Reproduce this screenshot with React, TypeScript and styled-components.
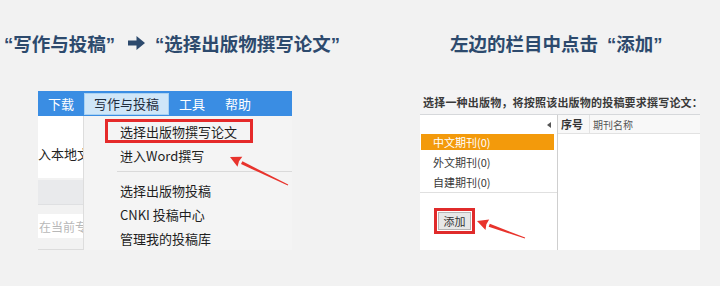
import React from 'react';
import styled, { createGlobalStyle } from 'styled-components';

const GlobalStyle = createGlobalStyle`
  html, body {
    margin: 0;
    padding: 0;
    background: #f2f2f2;
  }
  #root {
    width: 720px;
    height: 286px;
    overflow: hidden;
  }
`;

const cjk = `"Noto Sans CJK SC", "Liberation Sans", sans-serif`;

// a tapered red arrow, like the ones drawn over the screenshots
const Arrow: React.FC<{ from: [number, number]; to: [number, number] }> = ({ from, to }) => {
  const dx = to[0] - from[0];
  const dy = to[1] - from[1];
  const len = Math.hypot(dx, dy);
  const ux = dx / len;
  const uy = dy / len;
  const nx = -uy;
  const ny = ux;
  const headLen = 13;
  const headW = 5.5;
  const bx = to[0] - ux * headLen;
  const by = to[1] - uy * headLen;
  const p = (x: number, y: number) => `${x.toFixed(1)},${y.toFixed(1)}`;
  const shaft = [
    p(from[0] + nx * 0.4, from[1] + ny * 0.4),
    p(bx + nx * 1.6, by + ny * 1.6),
    p(bx - nx * 1.6, by - ny * 1.6),
    p(from[0] - nx * 0.4, from[1] - ny * 0.4),
  ].join(' ');
  const head = [
    p(to[0], to[1]),
    p(bx + nx * headW + ux * 2, by + ny * headW + uy * 2),
    p(bx + ux * 3, by + uy * 3),
    p(bx - nx * headW + ux * 2, by - ny * headW + uy * 2),
  ].join(' ');
  return (
    <ArrowLayer>
      <polygon points={shaft} fill="#e8332c" />
      <polygon points={head} fill="#e8332c" />
    </ArrowLayer>
  );
};

export default function App() {
  return (
    <>
      <GlobalStyle />
      <Page>
        <Column>
          <TitleRow $indent={4}>
            <Title>
              “写作与投稿”
              <TitleArrow viewBox="0 0 17 16">
                <path d="M0 5.5 H8.5 V1 L17 8 L8.5 15 V10.5 H0 Z" fill="#2d4a6d" />
              </TitleArrow>
              “选择出版物撰写论文”
            </Title>
          </TitleRow>
          <LeftShot>
            <MenuBar>
              <MenuItem>下载</MenuItem>
              <MenuItem $open>写作与投稿</MenuItem>
              <MenuItem>工具</MenuItem>
              <MenuItem>帮助</MenuItem>
            </MenuBar>
            <ShotBody>
              <SidePanel>
                <SideBlock>入本地文</SideBlock>
                <SideBand />
                <SearchBox>在当前专</SearchBox>
              </SidePanel>
              <Dropdown>
                <DropItem $boxed>选择出版物撰写论文</DropItem>
                <DropItem>进入Word撰写</DropItem>
                <DropSeparator />
                <DropItem>选择出版物投稿</DropItem>
                <DropItem>CNKI 投稿中心</DropItem>
                <DropItem>管理我的投稿库</DropItem>
              </Dropdown>
            </ShotBody>
            <Arrow from={[250, 94]} to={[192, 66]} />
          </LeftShot>
        </Column>

        <Column>
          <TitleRow $indent={90}>
            <Title>
              左边的栏目中点击<Quoted>“添加”</Quoted>
            </Title>
          </TitleRow>
          <RightShot>
            <DialogHeader>选择一种出版物，将按照该出版物的投稿要求撰写论文：</DialogHeader>
            <DialogBody>
              <CategoryCol>
                <CollapseRow>
                  <Triangle />
                </CollapseRow>
                <CategoryItem $active>中文期刊(0)</CategoryItem>
                <CategoryItem>外文期刊(0)</CategoryItem>
                <CategoryItem>自建期刊(0)</CategoryItem>
                <ButtonArea>
                  <RedFrame>
                    <AddButton>添加</AddButton>
                  </RedFrame>
                </ButtonArea>
              </CategoryCol>
              <ListCol>
                <ListHeader>
                  <HeaderCell $width={32} $strong>序号</HeaderCell>
                  <HeaderCell>期刊名称</HeaderCell>
                </ListHeader>
              </ListCol>
            </DialogBody>
            <Arrow from={[105, 148]} to={[57, 131]} />
          </RightShot>
        </Column>
      </Page>
    </>
  );
}

const Page = styled.div`
  width: 720px;
  height: 286px;
  display: grid;
  grid-template-columns: 360px 360px;
  background: #f2f2f2;
`;

const Column = styled.div`
  display: flex;
  flex-direction: column;
`;

const TitleRow = styled.div<{ $indent: number }>`
  height: 86px;
  display: flex;
  align-items: center;
  padding-left: ${(p) => p.$indent}px;
`;

const Title = styled.div`
  font-family: "Liberation Sans", "Noto Sans CJK SC", sans-serif;
  font-weight: 700;
  font-size: 18.5px;
  color: #2d4a6d;
  white-space: nowrap;
  display: flex;
  align-items: center;
`;

const Quoted = styled.span`
  margin-left: 9px;
`;

const TitleArrow = styled.svg`
  width: 17px;
  height: 16px;
  margin: 0 10px 0 13px;
`;

const ArrowLayer = styled.svg`
  position: absolute;
  left: 0;
  top: 0;
  width: 100%;
  height: 100%;
  overflow: visible;
  pointer-events: none;
`;

/* left screenshot */

const LeftShot = styled.div`
  position: relative;
  margin: 5px 0 0 38px;
  width: 254px;
  height: 159px;
  display: flex;
  flex-direction: column;
  font-family: ${cjk};
`;

const MenuBar = styled.div`
  height: 25px;
  background: #3a8de3;
  display: flex;
  align-items: center;
`;

const MenuItem = styled.div<{ $open?: boolean }>`
  height: 22px;
  padding: 0 9px;
  display: flex;
  align-items: center;
  font-size: 13px;
  color: ${(p) => (p.$open ? '#1f2d3d' : '#ffffff')};
  background: ${(p) => (p.$open ? '#cfe6f8' : 'transparent')};
  box-sizing: border-box;
  border: 1px solid ${(p) => (p.$open ? '#a9d2f2' : 'transparent')};
`;

const ShotBody = styled.div`
  position: relative;
  flex: 1;
  display: flex;
`;

/* the app content lying under the open menu */
const SidePanel = styled.div`
  flex: 1;
  display: flex;
  flex-direction: column;
  border-bottom: 1px solid #dcdcdc;
`;

const SideBlock = styled.div`
  height: 62px;
  background: #ffffff;
  font-size: 13px;
  color: #222;
  white-space: nowrap;
  padding-top: 28px;
  box-sizing: border-box;
`;

const SideBand = styled.div`
  height: 24px;
  margin-top: 2px;
  background: #e9eaec;
  border-bottom: 1px solid #dfe0e2;
`;

const SearchBox = styled.div`
  height: 24px;
  margin-top: 9px;
  background: #ffffff;
  font-size: 12px;
  color: #b8b8b8;
  white-space: nowrap;
  display: flex;
  align-items: center;
  padding-left: 1px;
`;

/* the open menu, lying over the content */
const Dropdown = styled.div`
  position: absolute;
  left: 45px;
  top: 0;
  right: 0;
  bottom: 0;
  background: #f4f4f4;
  border-left: 1px solid #dddddd;
  padding-top: 3px;
  display: flex;
  flex-direction: column;
`;

const DropItem = styled.div<{ $boxed?: boolean }>`
  height: 24px;
  box-sizing: border-box;
  display: flex;
  align-items: center;
  font-size: 13px;
  color: #1e1e1e;
  white-space: nowrap;
  padding-left: ${(p) => (p.$boxed ? 12 : 36)}px;
  margin-left: ${(p) => (p.$boxed ? 21 : 0)}px;
  width: ${(p) => (p.$boxed ? '148px' : 'auto')};
  border: ${(p) => (p.$boxed ? '3px solid #e52a2a' : 'none')};
`;

const DropSeparator = styled.div`
  height: 1px;
  background: #dadada;
  margin: 4px 0 6px 33px;
`;

/* right screenshot */

const RightShot = styled.div`
  position: relative;
  margin: 4px 0 0 60px;
  width: 280px;
  height: 160px;
  display: flex;
  flex-direction: column;
  background: #ffffff;
  font-family: ${cjk};
`;

const DialogHeader = styled.div`
  height: 24px;
  background: #f4f4f5;
  border-bottom: 1px solid #d6d8db;
  display: flex;
  align-items: center;
  padding-left: 3px;
  font-size: 11px;
  font-weight: 700;
  letter-spacing: 0.2px;
  color: #3a3a3a;
  white-space: nowrap;
`;

const DialogBody = styled.div`
  flex: 1;
  display: flex;
`;

const CategoryCol = styled.div`
  width: 137px;
  border-right: 1px solid #cfcfcf;
  display: flex;
  flex-direction: column;
`;

const CollapseRow = styled.div`
  height: 19px;
  display: flex;
  align-items: center;
  justify-content: flex-end;
  padding-right: 6px;
`;

const Triangle = styled.span`
  width: 0;
  height: 0;
  border-top: 3px solid transparent;
  border-bottom: 3px solid transparent;
  border-right: 4px solid #555;
`;

const CategoryItem = styled.div<{ $active?: boolean }>`
  height: ${(p) => (p.$active ? 16 : 20)}px;
  margin: ${(p) => (p.$active ? '0 3px 2px 1px' : '0')};
  padding-left: ${(p) => (p.$active ? 12 : 13)}px;
  display: flex;
  align-items: center;
  font-size: 11px;
  color: ${(p) => (p.$active ? '#ffffff' : '#3a3a3a')};
  background: ${(p) => (p.$active ? '#f39a0b' : 'transparent')};
`;

const ButtonArea = styled.div`
  flex: 1;
  border-top: 1px solid #e0e0e0;
  padding: 14px 0 0 14px;
`;

const RedFrame = styled.div`
  display: inline-flex;
  border: 3px solid #e02b2b;
  padding: 1px;
`;

const AddButton = styled.div`
  width: 31px;
  height: 16px;
  background: #e7e7e7;
  border: 1px solid #b5b5b5;
  font-size: 11px;
  color: #333;
  display: flex;
  align-items: center;
  justify-content: center;
`;

const ListCol = styled.div`
  flex: 1;
  display: flex;
  flex-direction: column;
`;

const ListHeader = styled.div`
  height: 18px;
  display: flex;
  background: #f8f8f8;
  border-bottom: 1px solid #e2e2e2;
`;

const HeaderCell = styled.div<{ $width?: number; $strong?: boolean }>`
  width: ${(p) => (p.$width ? `${p.$width}px` : 'auto')};
  flex: ${(p) => (p.$width ? 'none' : 1)};
  box-sizing: border-box;
  padding-left: 3px;
  display: flex;
  align-items: center;
  font-size: ${(p) => (p.$strong ? 11 : 10)}px;
  font-weight: ${(p) => (p.$strong ? 700 : 400)};
  color: ${(p) => (p.$strong ? '#333' : '#555')};
  border-right: ${(p) => (p.$width ? '1px solid #e2e2e2' : 'none')};
`;
